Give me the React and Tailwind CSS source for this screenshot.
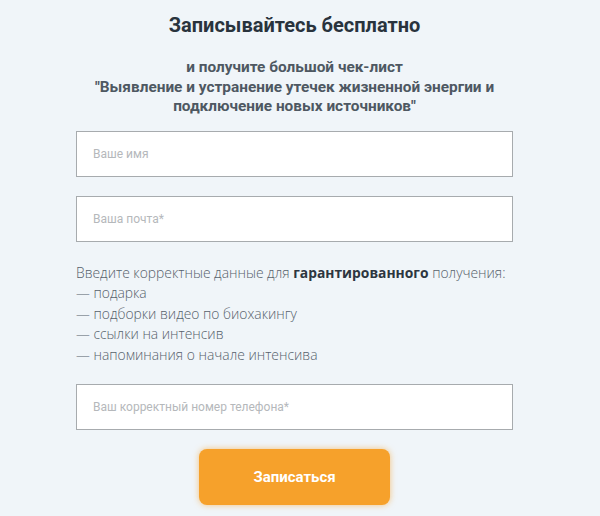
import React from 'react'

function Field({ placeholder }) {
  return (
    <input
      type="text"
      placeholder={placeholder}
      className="block w-full h-[46px] bg-white border border-[#a7abae] px-[16px] text-[12px] text-[#333] placeholder:text-[#b5b8bb] outline-none"
      style={{ fontFamily: 'Roboto, sans-serif' }}
    />
  )
}

export default function App() {
  return (
    <div className="min-h-screen bg-[#f0f5f9] flex justify-center pr-[11px]" style={{ fontFamily: 'Roboto, sans-serif' }}>
      <div className="w-[437px] pt-[11px] flex flex-col items-center">
        <h1 className="text-[20px] leading-[28px] font-bold text-[#29333d]">Записывайтесь бесплатно</h1>

        <p className="mt-[19px] w-[520px] text-center text-[15.4px] leading-[19.5px] font-bold text-[#4e5862]">
          и получите большой чек-лист
          <br />
          "Выявление и устранение утечек жизненной энергии и
          <br />
          подключение новых источников"
        </p>

        <div className="w-full mt-[14px] flex flex-col gap-[19px]">
          <Field placeholder="Ваше имя" />
          <Field placeholder="Ваша почта*" />
        </div>

        <div
          className="w-full mt-[21px] text-[13.85px] leading-[20.5px] font-light text-[#56616b]"
          style={{ fontFamily: '"Open Sans", sans-serif' }}
        >
          <p className="whitespace-nowrap">
            Введите корректные данные для <b className="font-bold text-[#2d3640]">гарантированного</b> получения:
          </p>
          <p>— подарка</p>
          <p>— подборки видео по биохакингу</p>
          <p>— ссылки на интенсив</p>
          <p>— напоминания о начале интенсива</p>
        </div>

        <div className="w-full mt-[19px]">
          <Field placeholder="Ваш корректный номер телефона*" />
        </div>

        <button className="mt-[19px] w-[191px] h-[56px] rounded-[8px] bg-[#f6a12b] text-white text-[15px] font-bold shadow-[0_0_6px_rgba(246,161,43,0.6)]">
          Записаться
        </button>
      </div>
    </div>
  )
}
